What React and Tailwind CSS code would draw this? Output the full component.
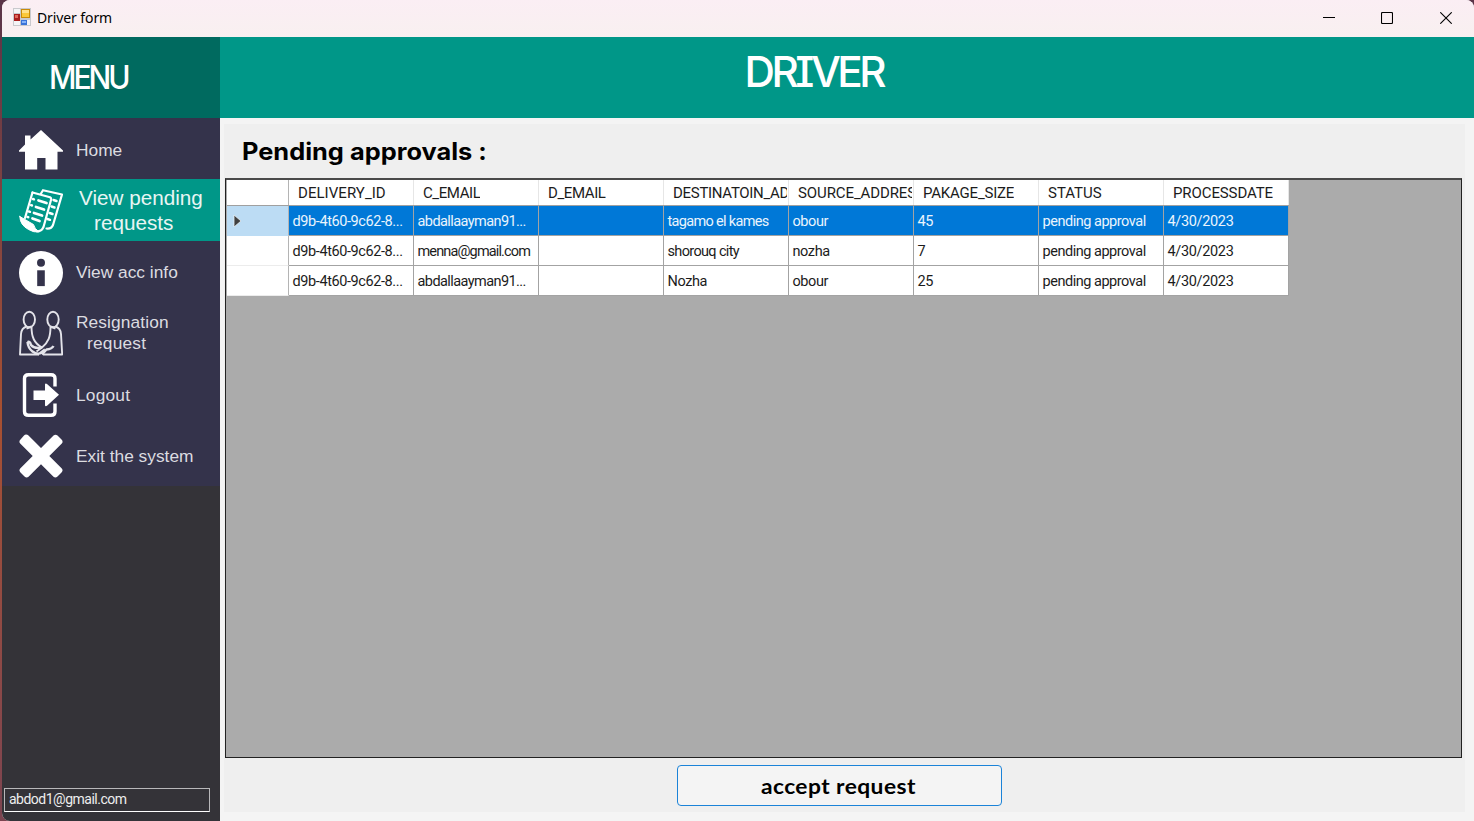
import React from "react";

const columns = [
  { name: "DELIVERY_ID", tracking: "tracking-[0.05px]" },
  { name: "C_EMAIL", tracking: "tracking-[-0.4px]" },
  { name: "D_EMAIL", tracking: "tracking-[-0.4px]" },
  { name: "DESTINATOIN_AD", tracking: "tracking-[-0.3px]" },
  { name: "SOURCE_ADDRES", tracking: "tracking-[-0.1px]" },
  { name: "PAKAGE_SIZE", tracking: "tracking-[-0.2px]" },
  { name: "STATUS", tracking: "tracking-[0px]" },
  { name: "PROCESSDATE", tracking: "tracking-[-0.1px]" },
];

const rows = [
  ["d9b-4t60-9c62-8...", "abdallaayman91...", "", "tagamo el kames", "obour", "45", "pending approval", "4/30/2023"],
  ["d9b-4t60-9c62-8...", "menna@gmail.com", "", "shorouq city", "nozha", "7", "pending approval", "4/30/2023"],
  ["d9b-4t60-9c62-8...", "abdallaayman91...", "", "Nozha", "obour", "25", "pending approval", "4/30/2023"],
];

const cellTracking = {
  "abdallaayman91...": "tracking-[-0.57px]",
  "menna@gmail.com": "tracking-[-0.87px]",
  "tagamo el kames": "tracking-[-0.68px]",
  "shorouq city": "tracking-[-0.65px]",
  "pending approval": "tracking-[-0.47px]",
  "4/30/2023": "tracking-[-0.34px]",
};

function FormIcon() {
  return (
    <svg width="18" height="18" viewBox="0 0 18 18" className="mb-[3px] shrink-0">
      <rect width="18" height="18" fill="#c9c9cd" />
      <path d="M1 1h6v4H1zM1 13h6v4H1zM14 12h3v5h-3z" fill="#f4f4f6" />
      <rect x="8" y="1" width="9" height="9" fill="#c98a08" />
      <rect x="9" y="2" width="7" height="7" fill="#fcc838" />
      <rect x="9" y="2" width="7" height="3" fill="#ffe08a" />
      <rect x="1" y="6" width="6" height="7" fill="#a81c1c" />
      <rect x="2" y="7" width="3" height="3" fill="#e2685c" />
      <rect x="8" y="12" width="6" height="5" fill="#3a74d8" />
      <rect x="9" y="13" width="4" height="2" fill="#86b4fa" />
    </svg>
  );
}

function HomeIcon() {
  return (
    <svg width="44" height="44" viewBox="0 0 44 44" fill="#fff">
      <path d="M22 2 11.500 11.500V7.500H6V16.500L0 22.500V23.800H6V41.500H18.200V30H26.500V41.500H38.500V23.800H44V22.500Z" />
    </svg>
  );
}

function RequestsIcon() {
  return (
    <svg width="44" height="44" viewBox="0 0 44 44" fill="none" stroke="#fff" strokeLinejoin="round" strokeLinecap="round">
      <path d="M13.500 3.500 31 8.200Q32.500 9 32 11L24.500 38Q22.500 42.500 18 42.500" strokeWidth="2.200" />
      <path d="M13.500 3.500 6 29" strokeWidth="2.200" />
      <path d="M0.800 27.500 14.500 35.500Q15.500 40 20 42.800Q15 43.800 9.500 40.500Q1 36 0.800 27.500Z" fill="#fff" strokeWidth="1" />
      <path d="M22 4.500 24 1.200 43 5.500 34 36Q32.500 40 27.500 39.500" strokeWidth="2.200" />
      <path d="M19.500 11.500 27.500 14M17 18 25 20.500M15 24 23 26.500M13.500 29.500 20.500 32" strokeWidth="2.800" />
      <path d="M14 10 15 10.300M12 16.200 13 16.500M10 22.500 11 22.800M8.500 28 9.300 28.200" strokeWidth="2.400" />
      <path d="M34.500 11 37.500 12M32.500 17.500 35.500 18.500M30.500 24 33.500 25M28.500 30 31 30.800" strokeWidth="2.400" />
    </svg>
  );
}

function InfoIcon() {
  return (
    <svg width="44" height="44" viewBox="0 0 44 44">
      <circle cx="22" cy="22" r="22" fill="#fff" />
      <circle cx="22" cy="11.800" r="4" fill="#34334b" />
      <rect x="18.200" y="19.300" width="7.600" height="15.800" fill="#34334b" />
    </svg>
  );
}

function HandshakeIcon() {
  return (
    <svg width="44" height="46" viewBox="0 0 44 46" fill="none" stroke="#e4e4ea" strokeWidth="1.900" strokeLinejoin="round">
      <ellipse cx="10.300" cy="9.500" rx="5.700" ry="7.800" />
      <ellipse cx="34" cy="9.500" rx="5.700" ry="7.800" />
      <path d="M7.500 16.500Q2.500 18 2 24L1 44.500H20" />
      <path d="M36.500 16.500Q41.500 18 42 24L43.200 44.500H24" />
      <path d="M12.500 16.500 7.500 18.500M12.500 16.500C12.500 27 15 33 23 37.500" />
      <path d="M31.500 16.500 36.500 18.500M31.500 16.500C31.500 27 29.500 32 23 37.500L17.500 41.500" />
      <path d="M8.500 32Q9 38 13.500 41.500 16 43.500 20 44M8.500 32Q11 31 12 35 15 39 23 37.500" strokeWidth="2.400" />
      <path d="M34.500 36Q33 39 27.500 39.500L23 44.500M20 44 26 39.500" strokeWidth="2.400" />
    </svg>
  );
}

function LogoutIcon() {
  return (
    <svg width="44" height="44" viewBox="0 0 44 44" fill="none">
      <path d="M36 13.500V5.500Q36 1.700 32 1.700H9.500Q5.500 1.700 5.500 5.500V38.500Q5.500 42.300 9.500 42.300H32Q36 42.300 36 38.500V30.500" stroke="#fff" strokeWidth="3.400" />
      <path d="M14.500 17.500H26V11.200Q26.500 10 28 11L40 21.800 28 32.800Q26.500 33.800 26 32.500V27H14.500Z" fill="#fff" />
    </svg>
  );
}

function ExitIcon() {
  return (
    <svg width="44" height="44" viewBox="0 0 44 44">
      <path d="M7 0.500Q8.500 0.500 9.500 1.500L22 14 34.500 1.500Q36.500 0 38.500 1.500L42.500 5.500Q44.500 7.500 42.800 9.500L30.300 22 42.800 34.500Q44.500 36.500 42.500 38.500L38.500 42.500Q36.500 44.500 34.500 42.800L22 30.300 9.500 42.800Q7.500 44.500 5.500 42.500L1.500 38.500Q-.5 36.500 1.200 34.500L13.700 22 1.200 9.500Q-.5 7.500 1.500 5.500L5 1.500Q6 .5 7 .5Z" fill="#fff" />
    </svg>
  );
}

function MenuItem({ icon, children, shift = "pt-[2px]" }) {
  return (
    <div className={`flex h-[61px] items-center pl-[17px] text-[17.33px] leading-[21px] text-[#dcdce0] ${shift}`}>
      <div className="mr-[13px] w-11 shrink-0">{icon}</div>
      {children}
    </div>
  );
}

function Sidebar() {
  return (
    <aside className="flex w-[218px] shrink-0 flex-col bg-[#343338]">
      <div className="flex h-[81px] items-center bg-[#006a5f] pl-[47px] font-['Inter'] text-[32px] font-medium text-white">
        <span className="inline-block origin-left scale-x-[0.94] tracking-[-3.2px]">MENU</span>
      </div>
      <nav className="flex h-[368px] flex-col bg-[#34334b] font-['Liberation_Sans',sans-serif]">
        <MenuItem icon={<HomeIcon />} shift="pt-[3px]">
          <span>Home</span>
        </MenuItem>
        <div className="flex h-[62px] items-center bg-[#009788] pl-[17px] text-[20.7px] leading-[25px] text-[#e8f5f3]">
          <div className="mt-[2px] mr-4 w-11 shrink-0"><RequestsIcon /></div>
          <div className="flex flex-col">
            <span>View pending</span>
            <span className="pl-[15px]">requests</span>
          </div>
        </div>
        <MenuItem icon={<InfoIcon />}>
          <span>View acc info</span>
        </MenuItem>
        <MenuItem icon={<HandshakeIcon />} shift="pt-px">
          <div className="flex flex-col">
            <span className="tracking-[0.1px]">Resignation</span>
            <span className="pl-[11px] tracking-[0.2px]">request</span>
          </div>
        </MenuItem>
        <MenuItem icon={<LogoutIcon />} shift="pt-[3px]">
          <span className="tracking-[0.2px]">Logout</span>
        </MenuItem>
        <MenuItem icon={<ExitIcon />} shift="pt-[3px]">
          <span>Exit the system</span>
        </MenuItem>
      </nav>
      <div className="mt-auto mb-[9px] ml-[2px] flex h-6 w-[206px] items-center border border-[#b8b8ba] border-b-white pb-[2px] pl-1 font-['Roboto',sans-serif] text-[14px] text-[#eeeeee]">
        <span className="tracking-[-0.5px]">abdod1@gmail.com</span>
      </div>
    </aside>
  );
}

function Grid() {
  return (
    <div className="ml-px h-[580px] w-[1237px] border border-[#222] border-t-2 border-t-[#4a4a4a] bg-[#ababab] font-['Roboto',sans-serif] text-[15px] text-[#1c1c1c]">
      <div className="ml-px flex w-[1062px] flex-col">
        <div className="flex h-[26px] border-b border-[#a0a0a0] bg-white">
          <div className="w-[62px] shrink-0 border-r border-[#b4b4b4]" />
          {columns.map((c) => (
            <div key={c.name} className="flex w-[125px] shrink-0 items-center border-r border-[#e6e6e6] pt-[2px] pr-px pl-[9px]">
              <span className={`overflow-hidden whitespace-nowrap ${c.tracking}`}>{c.name}</span>
            </div>
          ))}
        </div>
        {rows.map((row, r) => (
          <div key={r} className={`flex h-[30px] ${r === 0 ? "bg-[#0078d7] text-[#eaf4fd]" : "bg-white"}`}>
            <div className={`flex w-[62px] shrink-0 items-center border-r border-b border-r-[#b4b4b4] pl-[6px] ${r === 0 ? "border-b-[#bcdcf4] bg-[#bcdcf4]" : "border-b-[#ececec]"}`}>
              {r === 0 && (
                <svg width="9" height="14" viewBox="0 0 9 14"><path d="M1 1v12l7-6z" fill="#404040" stroke="#e8f0f6" strokeWidth="0.800" /></svg>
              )}
            </div>
            {row.map((cell, i) => (
              <div key={i} className="flex w-[125px] shrink-0 items-center border-r border-b border-[#a3a3a3] pt-[2px] pl-[3.5px] text-[14.5px] whitespace-nowrap">
                <span className={cellTracking[cell] || "tracking-[-0.4px]"}>{cell}</span>
              </div>
            ))}
          </div>
        ))}
      </div>
    </div>
  );
}

export default function App() {
  return (
    <div className="h-[821px] w-[1474px] overflow-hidden bg-linear-to-b from-[#5a3448] via-[#a85030] to-[#7c4450] pl-[2px]">
      <div className="flex h-full flex-col overflow-hidden rounded-t-lg rounded-bl-lg bg-[#f4f4f4]">
        <header className="flex h-[37px] shrink-0 items-center bg-linear-to-b from-[#fbeef4] to-[#f8f0f0] pl-[11px] text-black">
          <FormIcon />
          <span className="mb-[2px] ml-[6px] font-['Noto_Sans',sans-serif] text-[14px] tracking-[-0.1px]">Driver form</span>
          <div className="mr-[22px] mb-px ml-auto flex items-center">
            <svg width="12" height="12" viewBox="0 0 12 12" className="mr-[46px]"><path d="M0 5.500H12" stroke="#000" /></svg>
            <svg width="12" height="12" viewBox="0 0 12 12" fill="none" stroke="#000" className="mr-[47px]"><rect x=".5" y=".5" width="11" height="11" rx="1" strokeWidth="1.100" /></svg>
            <svg width="12" height="12" viewBox="0 0 12 12" stroke="#000"><path d="M.3.3 11.700 11.700M11.700.3.3 11.700" strokeWidth="1.100" /></svg>
          </div>
        </header>
        <div className="flex min-h-0 flex-1">
          <Sidebar />
          <main className="flex min-w-0 flex-1 flex-col">
            <div className="flex h-[81px] shrink-0 justify-center bg-[#009788] pt-[8px] pr-[66px] font-['Inter'] text-[43px] leading-[52px] font-medium text-white">
              <span className="inline-block scale-x-[0.98] tracking-[-3.5px] [font-feature-settings:'cv08']">DRIVER</span>
            </div>
            <div className="mt-[6px] mr-[9px] ml-[4px] flex h-[688px] flex-col bg-[#efefef]">
              <h1 className="flex h-[54px] items-center pt-px pl-[18px] font-['Inter'] text-[24px] font-bold text-black">
                <span className="inline-block origin-left scale-x-[1.058]">Pending approvals :</span>
              </h1>
              <Grid />
              <button className="mt-[7px] ml-[453px] flex h-[41px] w-[325px] items-center justify-center rounded-[4px] border border-[#1b83d8] bg-[#f4f4f4] pr-[3px] font-['Lato'] text-[21px] font-bold text-black">
                <span className="inline-block scale-x-[1.085] tracking-[0.4px]">accept request</span>
              </button>
            </div>
          </main>
        </div>
      </div>
    </div>
  );
}
